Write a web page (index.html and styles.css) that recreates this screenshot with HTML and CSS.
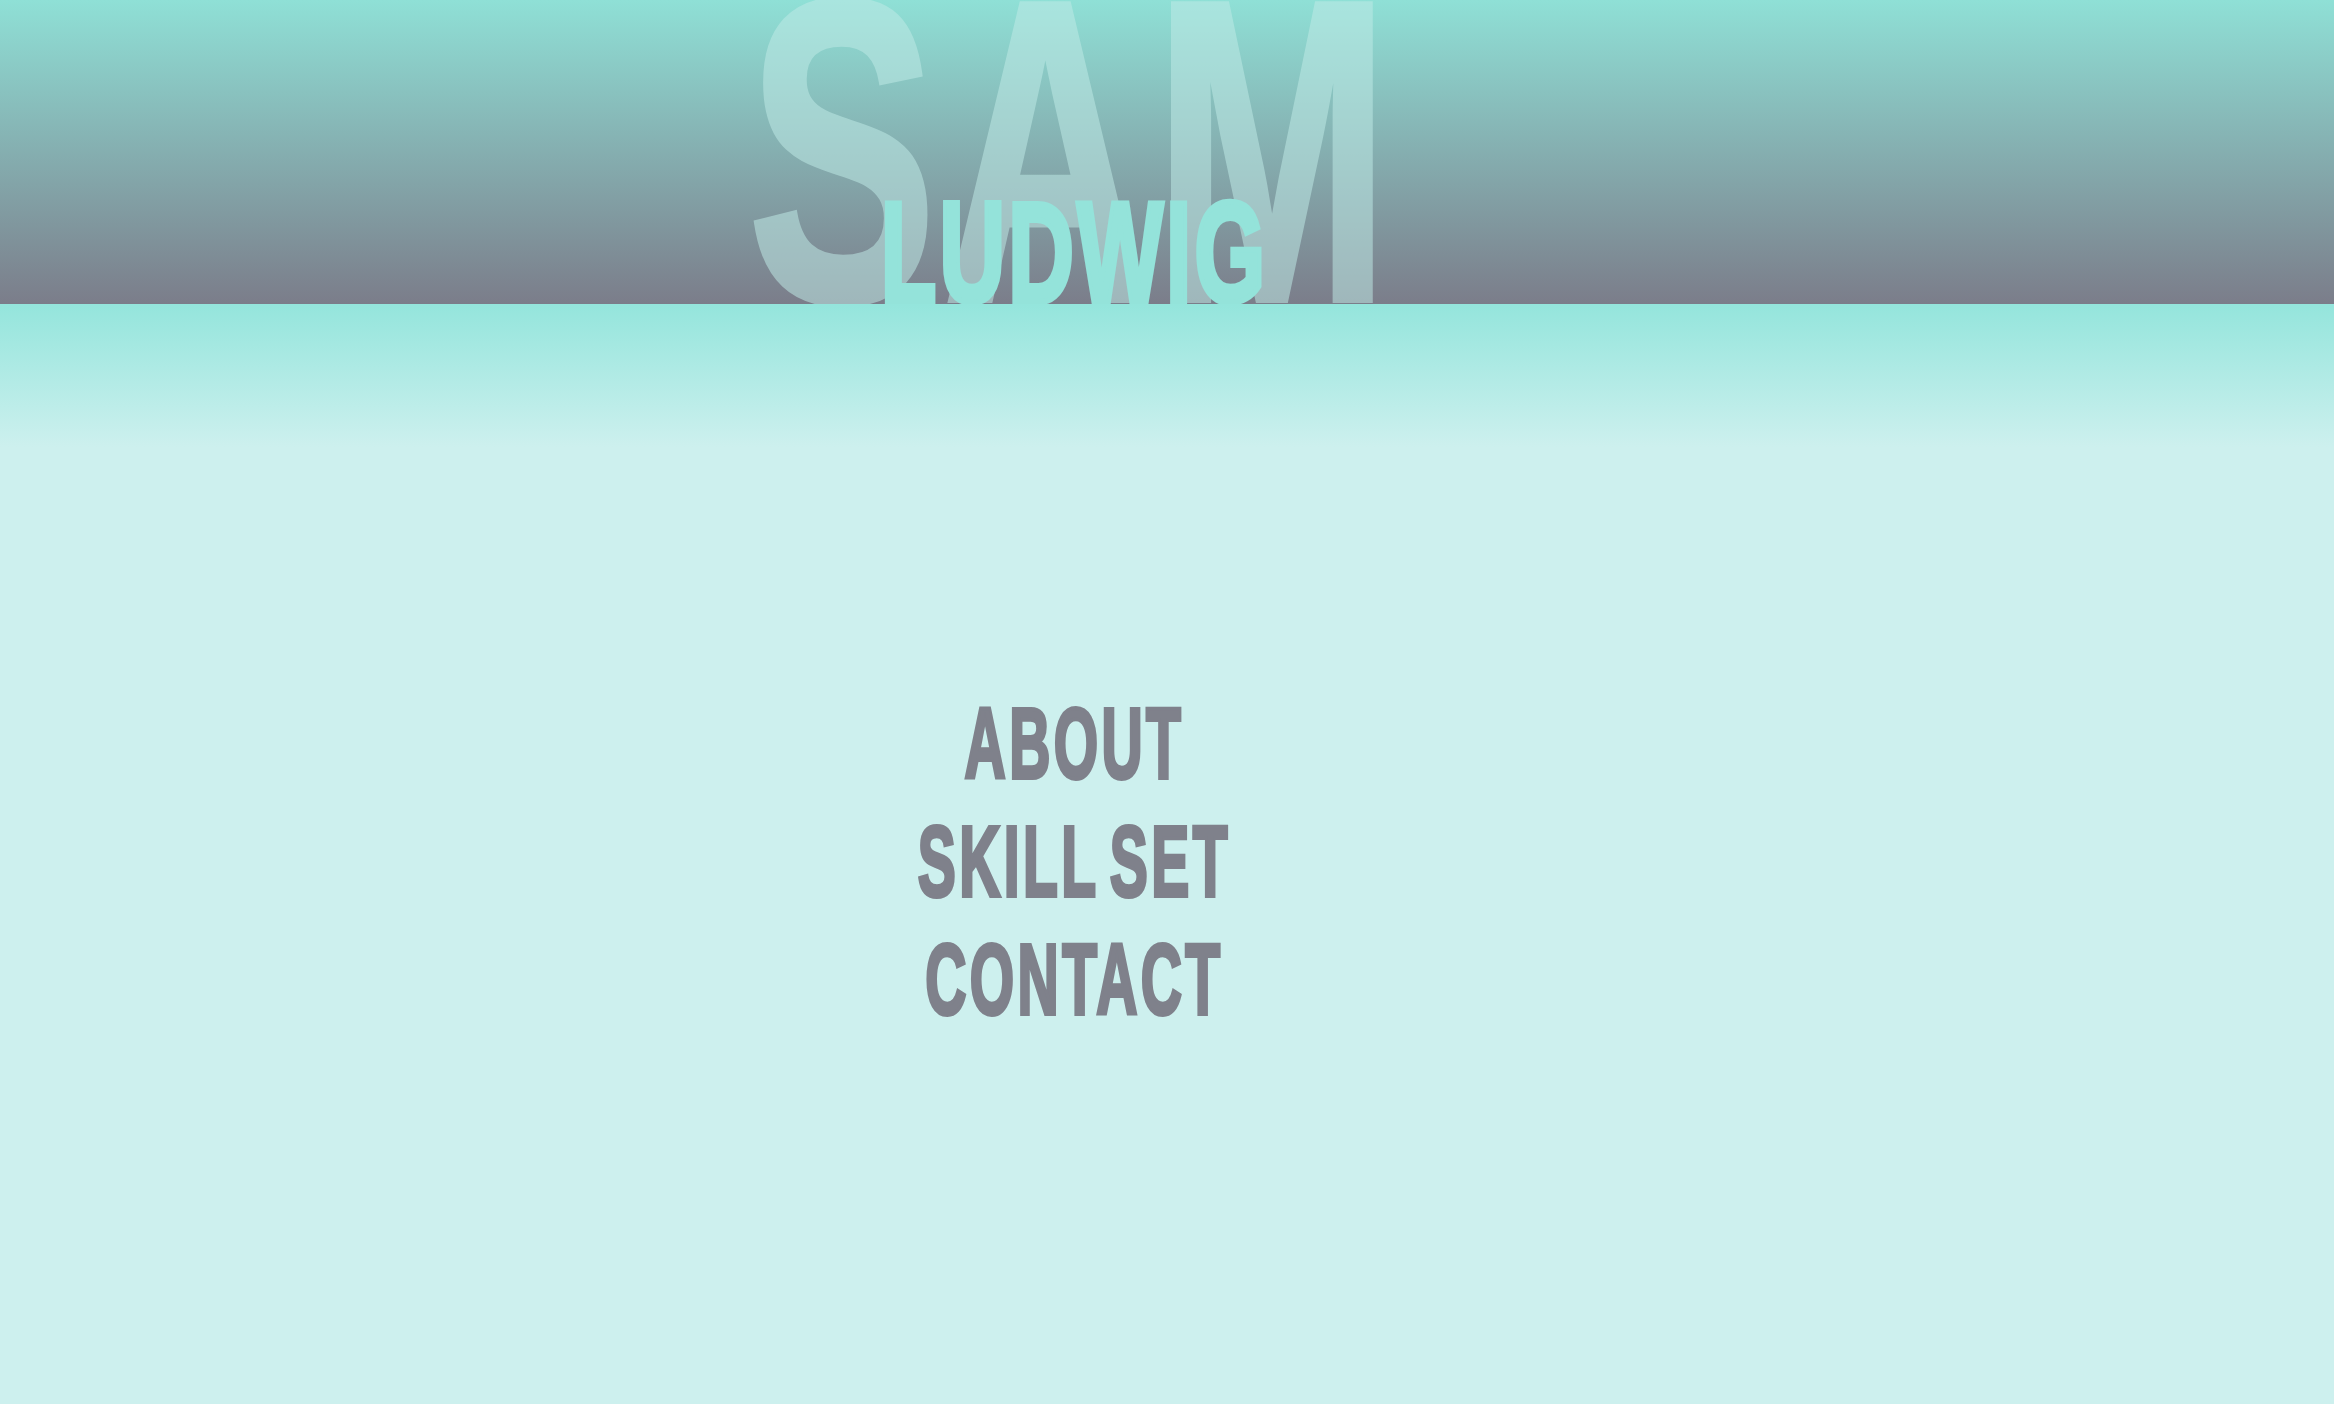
FILE: index.html
```html
<!DOCTYPE html>
<html lang="en">
<head>
<meta charset="utf-8">
<title>Sam Ludwig</title>
<link rel="stylesheet" href="styles.css">
</head>
<body>
  <header class="hero">
    <h1 class="name">
      <span class="first">SAM</span>
      <span class="last">LUDWIG</span>
    </h1>
  </header>
  <main class="page">
    <nav class="menu">
      <a class="menu-link" href="#about">ABOUT</a>
      <a class="menu-link" href="#skills">SKILL SET</a>
      <a class="menu-link" href="#contact">CONTACT</a>
    </nav>
  </main>
</body>
</html>
```

FILE: styles.css
```css
html, body {
  margin: 0;
  padding: 0;
}

body {
  background: #cdf0ee;
  font-family: "Liberation Sans", Arial, sans-serif;
  font-weight: 700;
  min-height: 1404px;
}

.hero {
  height: 304px;
  overflow: hidden;
  background: linear-gradient(to bottom, #8fe0d6 0%, #7b7d8a 100%);
  display: flex;
  justify-content: center;
  align-items: flex-end;
  padding-right: 188px;
}

.name {
  margin: 0;
  position: relative;
  display: flex;
  align-items: flex-end;
  font-weight: 700;
}

.first {
  display: block;
  font-size: 430px;
  line-height: 0.712;
  letter-spacing: 10px;
  padding-left: 10px;
  white-space: nowrap;
  color: #c0ebe7;
  -webkit-text-stroke: 6px #c0ebe7;
  opacity: 0.53;
  transform: translateX(-4px) scaleX(0.658);
  transform-origin: center;
}

.last {
  position: absolute;
  left: 50%;
  bottom: 0;
  font-size: 142px;
  line-height: 0.72;
  letter-spacing: 5px;
  padding-left: 5px;
  white-space: nowrap;
  color: #94e3da;
  -webkit-text-stroke: 6px #94e3da;
  transform: translateX(-50%) scaleX(0.64);
  transform-origin: center;
}

.page {
  min-height: 1100px;
  background: linear-gradient(to bottom, #94e5dc 0px, #cdf0ee 143px, #cdf0ee 100%);
  padding-right: 188px;
  padding-top: 380px;
  box-sizing: border-box;
}

.menu {
  display: flex;
  flex-direction: column;
  align-items: center;
}

.menu-link {
  display: block;
  font-size: 100px;
  line-height: 118px;
  letter-spacing: 6px;
  word-spacing: -14px;
  padding-left: 6px;
  color: #7f818b;
  -webkit-text-stroke: 4px #7f818b;
  text-decoration: none;
  white-space: nowrap;
  transform: scaleX(0.57);
  transform-origin: center;
}
```
